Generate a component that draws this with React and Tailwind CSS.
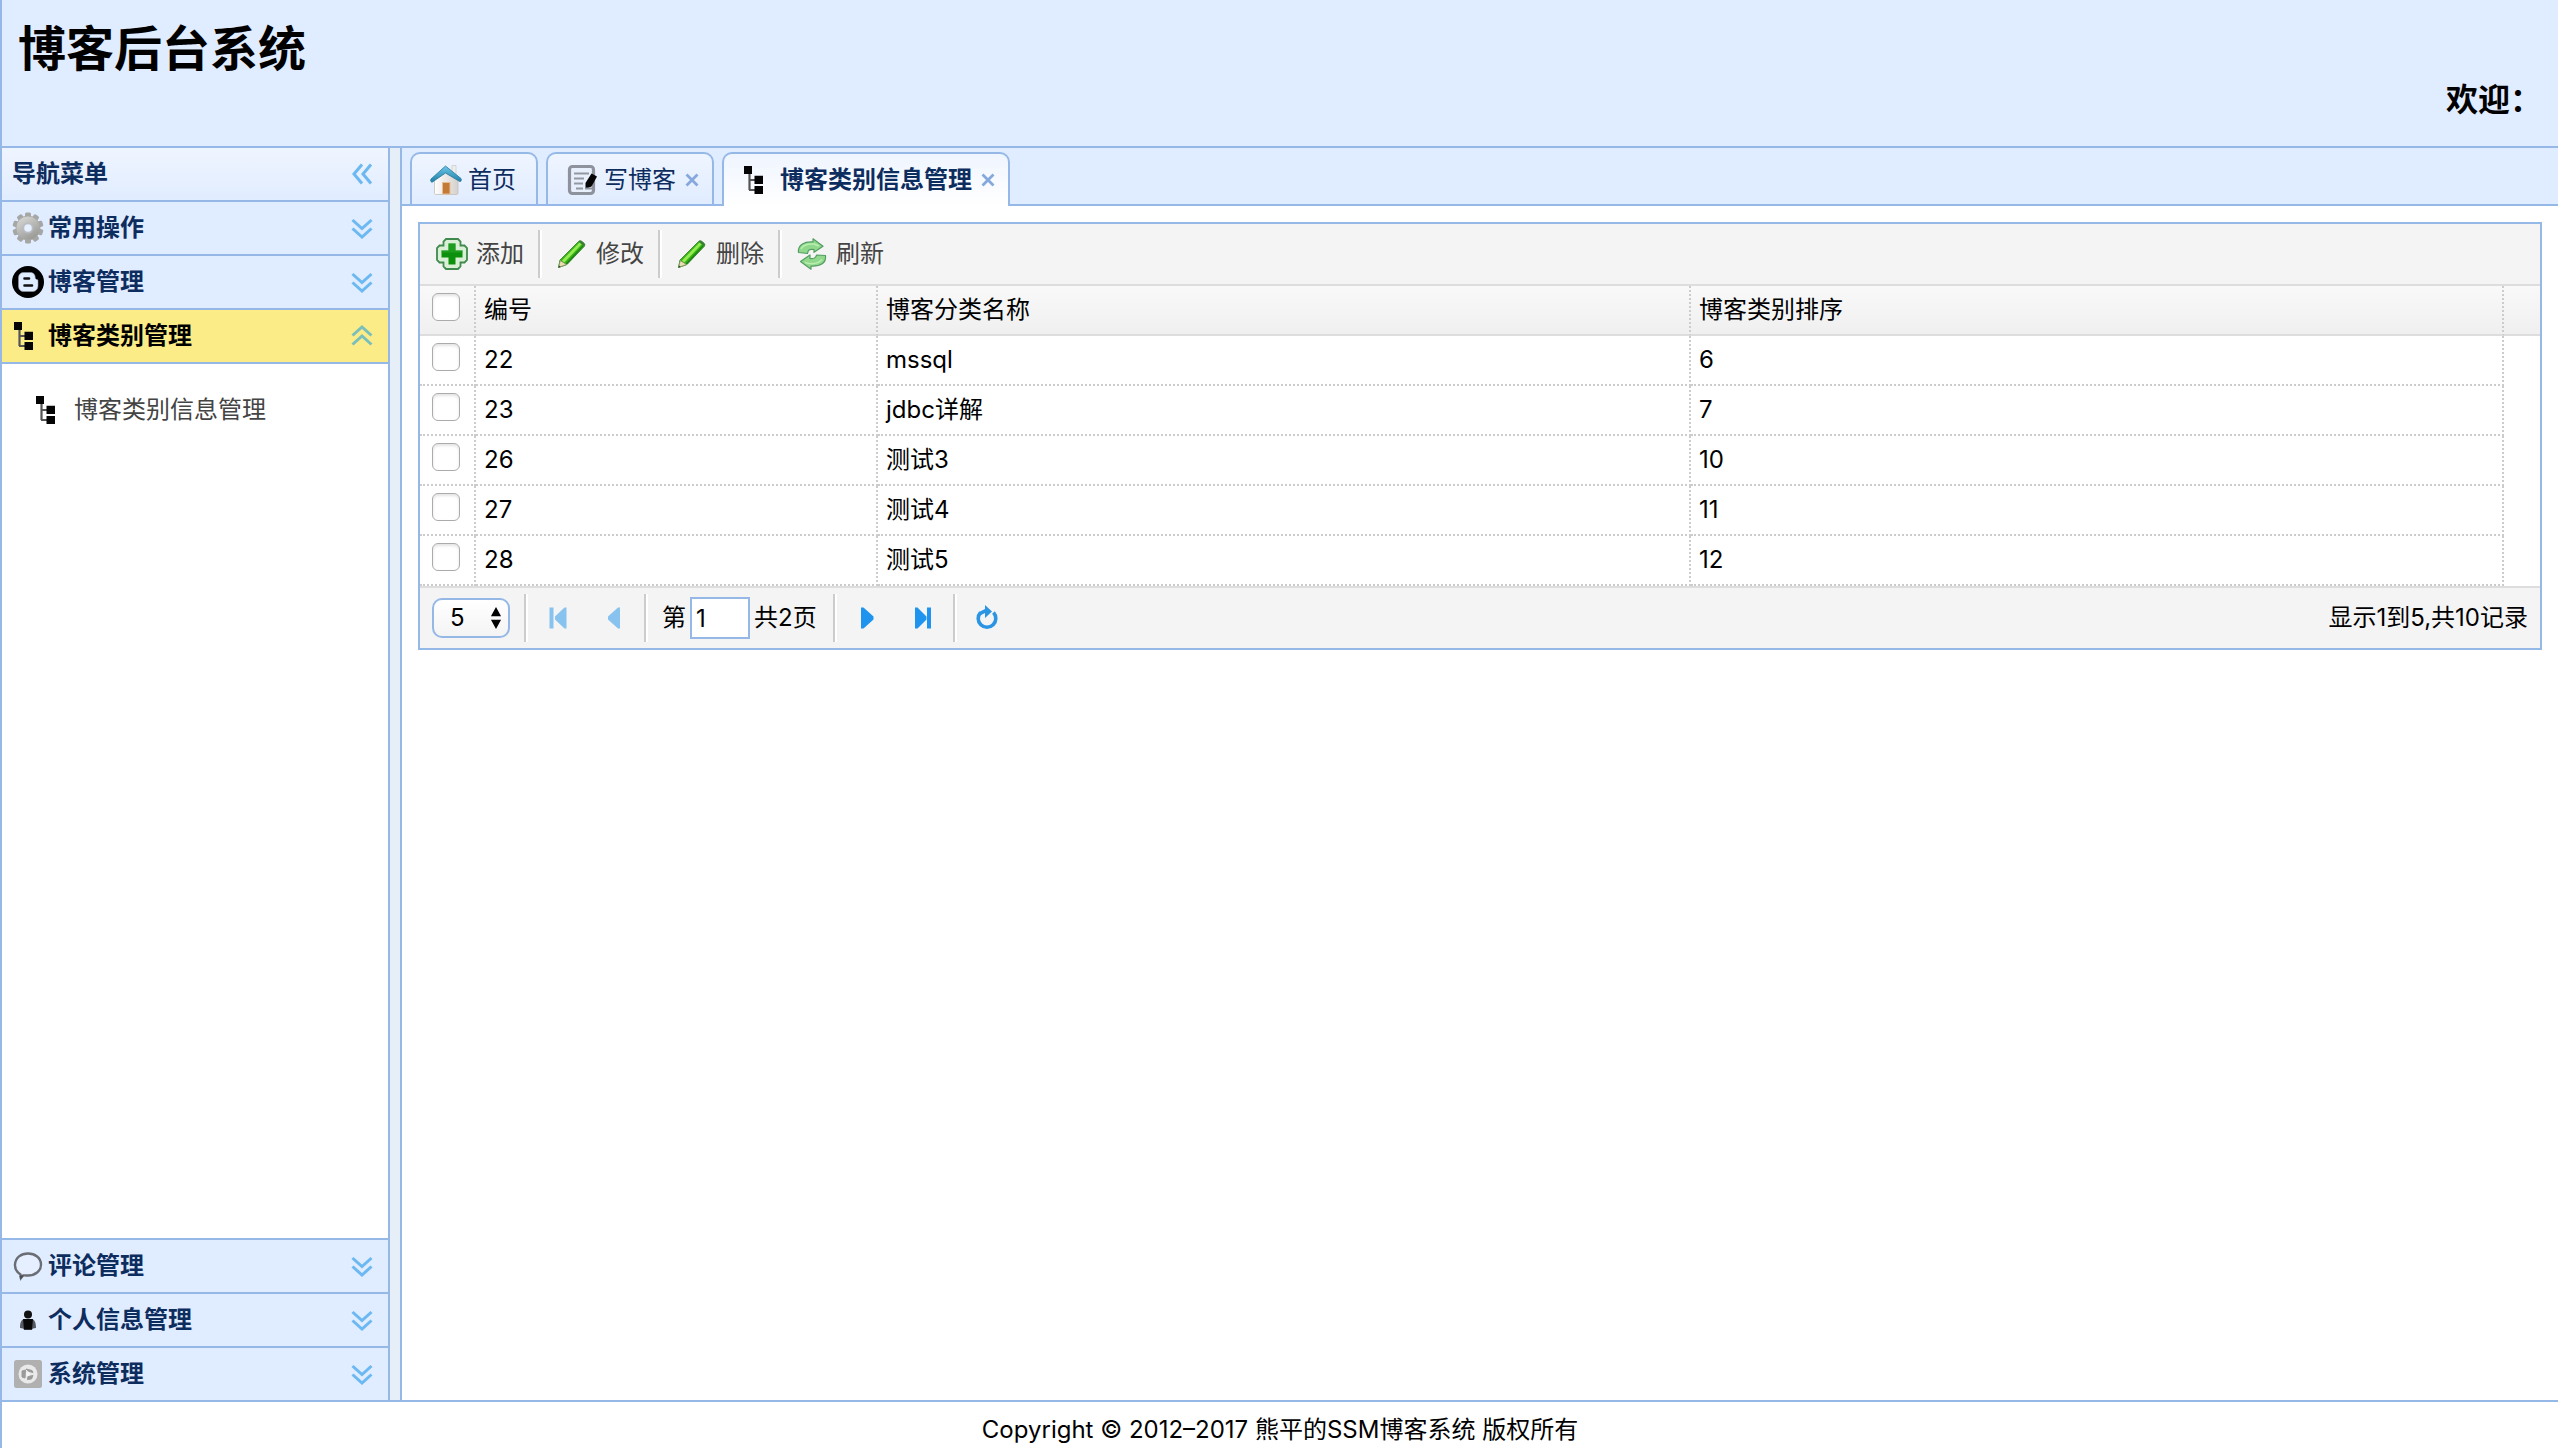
import React, { useState } from "react";

const TreeIcon = () => (
  <svg viewBox="0 0 32 32" className="size-8 shrink-0" aria-hidden="true">
    <path d="M7.500 8v18M7 16h7M7 26h7" fill="none" stroke="#555" strokeWidth="2.200" />
    <path d="M2 2h8v8H2zM12.500 11.800h8.500v8.200h-8.500zM12.500 22h8.500v8h-8.500z" fill="#050505" />
  </svg>
);

const GearIcon = () => (
  <svg viewBox="0 0 32 32" className="size-8 shrink-0" aria-hidden="true">
    <defs>
      <linearGradient id="gear" x1="0" y1="0" x2="0.6" y2="1">
        <stop offset="0" stopColor="#dededc" />
        <stop offset="1" stopColor="#9a9a97" />
      </linearGradient>
    </defs>
    <g fill="#a6a6a4">
      {[0, 36, 72, 108, 144].map((deg) => (
        <rect key={deg} x="13" y="0.5" width="6" height="31" rx="1.5" transform={`rotate(${deg} 16 16)`} />
      ))}
    </g>
    <circle cx="16" cy="16" r="12" fill="url(#gear)" stroke="#a6a6a4" strokeWidth="0.8" />
    <circle cx="16" cy="16" r="5.5" fill="#b9bcc2" />
    <circle cx="16" cy="16" r="3.8" fill="#e6f0ff" />
  </svg>
);

const BlogIcon = () => (
  <svg viewBox="0 0 32 32" className="size-8 shrink-0" aria-hidden="true">
    <circle cx="16" cy="16" r="16" fill="#000" />
    <path
      d="M12 6.500h6.500c3 0 4.700 2.200 4.700 4.800 0 1.500.7 2 1.800 2.200.9.200 1 .9 1 1.700v4.300c0 4-2.500 6-6 6h-8c-3.500 0-5.500-2-5.500-5.500v-8c0-3.500 2-5.500 5.500-5.500z"
      fill="#e0ecff"
      stroke="#8e97a6"
      strokeWidth="0.6"
    />
    <path d="M12.500 12.500h4.500M12.500 19.500h7.500" stroke="#111" strokeWidth="2.600" strokeLinecap="round" />
  </svg>
);

const BubbleIcon = () => (
  <svg viewBox="0 0 32 32" className="size-8 shrink-0" aria-hidden="true">
    <path
      d="M8.500 24.500C4.500 22 2.800 18.500 3 14.500 3.500 7.500 9 3.500 16 3.500s13 4.300 13 11-6 11-13 11c-2 0-3.500-.3-5 0l-2 2.500z"
      fill="#e6efff"
      stroke="#6a6d73"
      strokeWidth="2.400"
    />
    <path d="M7.500 25.500l.5 4 4-4z" fill="#4a4c50" />
  </svg>
);

const PersonIcon = () => (
  <svg viewBox="0 0 32 32" className="size-8 shrink-0" aria-hidden="true">
    <circle cx="16" cy="10.500" r="4" fill="#111" />
    <path d="M8 24c0-6 1.500-9 5.500-9h5c4 0 5.500 3 5.500 9l-3 .5-1.500 1.500h-7l-1.500-1.500z" fill="#565a62" />
    <path d="M11 15h10l-1 10.500h-8z" fill="#080808" />
  </svg>
);

const SystemIcon = () => (
  <svg viewBox="0 0 32 32" className="size-8 shrink-0" aria-hidden="true">
    <rect x="2" y="2" width="28" height="28" rx="2.500" fill="#b0b0b0" />
    <circle cx="16" cy="16" r="9.500" fill="#e9e9e9" />
    <path d="M14 11l6 1.500 1 2-4-1zM10 13l3.500-1-.5 8-3-1zM16 18.500l5-1-1.500 3.500-4 .5z" fill="#9a9a9a" stroke="#9a9a9a" />
    <circle cx="16" cy="16" r="2" fill="#f4f4f4" />
  </svg>
);

const HomeIcon = () => (
  <svg viewBox="0 0 32 32" className="size-8 shrink-0" aria-hidden="true">
    <defs>
      <linearGradient id="roof" x1="0" y1="0" x2="0" y2="1">
        <stop offset="0" stopColor="#6cc7e8" />
        <stop offset="1" stopColor="#1f7ea8" />
      </linearGradient>
      <linearGradient id="wall" x1="0" y1="0" x2="1" y2="0">
        <stop offset="0" stopColor="#fff" />
        <stop offset="1" stopColor="#d5d0cb" />
      </linearGradient>
    </defs>
    <path d="M22 1.500h4v10l-4-4z" fill="#eee" stroke="#c9c9c9" strokeWidth="0.7" />
    <path d="M4.500 15L16 6l12 9.500V29c0 1-.6 1.500-1.500 1.500H6c-1 0-1.500-.5-1.500-1.500z" fill="url(#wall)" stroke="#c4bfba" strokeWidth="0.8" />
    <path d="M15.500 2L31 14.500c.8 1 .2 3.500-1.300 3L15.500 9 2.500 18c-1.500.8-2.500-1.800-1.500-3z" fill="url(#roof)" stroke="#27789c" strokeWidth="0.8" />
    <rect x="12.500" y="18.500" width="7.500" height="11.500" fill="#c47a37" stroke="#e3bd95" />
  </svg>
);

const WriteIcon = () => (
  <svg viewBox="0 0 32 32" className="size-8 shrink-0" aria-hidden="true">
    <rect x="3.500" y="2.500" width="24" height="27" rx="3" fill="#e9f0fd" stroke="#8d929c" strokeWidth="3.200" />
    <path d="M8 9.500h15M8 14.500h10M8 19.500h9M10 24.500h7" stroke="#9398a1" strokeWidth="2.200" />
    <path d="M25.500 9.500l5.500 3-5.500 10-6 2.500v-6z" fill="#050505" />
    <path d="M19 24.500h8" stroke="#8d929c" strokeWidth="2" />
  </svg>
);

const AddIcon = () => (
  <svg viewBox="0 0 32 32" className="size-8 shrink-0" aria-hidden="true">
    <path
      d="M10 1h12l2.500 2.500V7.500h4L31 10v12l-2.500 2.500h-4v4L22 31H10l-2.500-2.500v-4h-4L1 22V10l2.500-2.500h4v-4z"
      fill="#d9f0d6"
      stroke="#3f8a4c"
      strokeWidth="1.800"
    />
    <path d="M12.500 5.500h7v7h7v7h-7v7h-7v-7h-7v-7h7z" fill="#0d910d" />
    <path d="M12.500 5.500h7v7h7v2h-21v-2h7z" fill="#2aa52a" opacity="0.6" />
  </svg>
);

const PencilIcon = () => (
  <svg viewBox="0 0 32 32" className="size-8 shrink-0" aria-hidden="true">
    <path d="M4 22L22.500 3.500c1-1 2-1 3-.3l2.500 2c1 1 1 2 .2 3.200L11 26.500 2.500 29.500z" fill="#35b512" stroke="#4d8a42" strokeWidth="1" />
    <path d="M6 22.500L23.500 4.500l2.200 1.800L8.300 24.500z" fill="#98ea55" />
    <path d="M9.800 25.500L27 7l.8.800L11 26.300z" fill="#1a8017" />
    <path d="M4.300 22.500l6.200 4-8 3z" fill="#ecdcb0" stroke="#7a9560" strokeWidth="0.800" />
    <path d="M3 27.500l1.800 1.200-2.500 1z" fill="#1d4f25" />
    <path d="M22.500 3.500c1-1 2-1 3-.3l2.500 2c1 1 1 2 .2 3z" fill="#3b7d3a" />
  </svg>
);

const ReloadIcon = () => (
  <svg viewBox="0 0 32 32" className="size-8 shrink-0" aria-hidden="true">
    <g fill="#90d98c" stroke="#529c63" strokeWidth="1.200" strokeLinejoin="round">
      <path d="M2.500 14.500C1.500 7 8 3.500 17 4V.8l10 7.500-9 6V11.500c-4-.5-6 0-6.500 4z" />
      <path d="M29.500 17.500c1 7.500-5 11-14.500 10.500v3.200L4.500 23.500 14 17v3.500c4 .5 6 0 6.500-3.500z" />
    </g>
    <path d="M5 11c2-4 6-5.500 13-5l5 2" fill="none" stroke="#b9efb0" strokeWidth="1.500" />
    <path d="M9 24.500c6 2 13 1.500 17-3" fill="none" stroke="#b9efb0" strokeWidth="1.500" />
  </svg>
);

const Chevrons = ({ dir }) => {
  const paths = {
    left: "M16 6.500L8 16l8 9.500M25 6.500L17 16l8 9.500",
    down: "M6.500 8l9.500 8.500L25.500 8M6.500 16.500l9.500 8.500 9.500-8.500",
    up: "M6.500 15.500L16 7l9.500 8.500M6.500 24.500L16 16l9.500 8.500",
  };
  return (
    <svg viewBox="0 0 32 32" className="size-8 shrink-0" aria-hidden="true">
      <path d={paths[dir]} fill="none" stroke={dir === "up" ? "#7bbfba" : "#6bb8f2"} strokeWidth="3" />
    </svg>
  );
};

const CloseIcon = () => (
  <svg viewBox="0 0 16 16" className="size-4" aria-hidden="true">
    <path d="M2.500 2.500l11 11M13.500 2.500l-11 11" stroke="#86a8dc" strokeWidth="2.800" />
  </svg>
);

const PAGER_PATHS = {
  first: "M7.500 5.500h4v21h-4zM24.500 5.500v21h-2L13 17.500v-3l9.500-9z",
  prev: "M22 5.500v21h-2L10 17.500v-3l10-9z",
  next: "M10 5.500v21h2.500L22.500 17.500v-3L12.500 5.500z",
  last: "M20 5.500h4v21h-4zM8 5.500v21h2.500L19.500 17.500v-3L10.500 5.500z",
};

const PagerButton = ({ type, label, disabled }) => (
  <button type="button" aria-label={label} disabled={disabled} className="px-3 disabled:opacity-50">
    <svg viewBox="0 0 32 32" className="size-8" aria-hidden="true">
      {type === "load" ? (
        <>
          <path d="M9.500 10.500A8.800 8.800 0 1 0 22.500 10.500" fill="none" stroke="#2b95e3" strokeWidth="3.600" />
          <path d="M14 3l7 6.500-7 6.500V11l-5 2.500L8 10l6-3z" fill="#2b95e3" />
        </>
      ) : (
        <path d={PAGER_PATHS[type]} fill="#1e94ee" />
      )}
    </svg>
  </button>
);

const Separator = () => <div className="h-12 w-1 border-l-2 border-r-2 border-l-[#cccccc] border-r-white" />;

const sections = [
  { title: "常用操作", icon: GearIcon, items: [] },
  { title: "博客管理", icon: BlogIcon, items: [] },
  { title: "博客类别管理", icon: TreeIcon, items: ["博客类别信息管理"] },
  { title: "评论管理", icon: BubbleIcon, items: [] },
  { title: "个人信息管理", icon: PersonIcon, items: [] },
  { title: "系统管理", icon: SystemIcon, items: [] },
];

const tabs = [
  { title: "首页", icon: HomeIcon, closable: false },
  { title: "写博客", icon: WriteIcon, closable: true },
  { title: "博客类别信息管理", icon: TreeIcon, closable: true },
];

const tools = [
  { title: "添加", icon: AddIcon },
  { title: "修改", icon: PencilIcon },
  { title: "删除", icon: PencilIcon },
  { title: "刷新", icon: ReloadIcon },
];

const rows = [
  { id: 22, name: "mssql", order: 6 },
  { id: 23, name: "jdbc详解", order: 7 },
  { id: 26, name: "测试3", order: 10 },
  { id: 27, name: "测试4", order: 11 },
  { id: 28, name: "测试5", order: 12 },
];

const Checkbox = ({ label }) => (
  <input
    type="checkbox"
    aria-label={label}
    className="block size-7 appearance-none rounded-md border border-[#ababab] bg-white shadow-[inset_0_2px_3px_#e4e4e4] checked:bg-[#1e94ee]"
  />
);

const Sidebar = () => {
  const [open, setOpen] = useState(2);

  return (
    <aside className="flex w-[388px] shrink-0 flex-col border-r-2 border-[#95b8e7] bg-white">
      <div className="flex h-[54px] shrink-0 items-center justify-between border-b-2 border-[#95b8e7] bg-linear-to-b from-[#eff5ff] to-[#e0ecff] px-2.5">
        <h2 className="font-bold text-[#0e2d5f]">导航菜单</h2>
        <button type="button" aria-label="收起导航">
          <Chevrons dir="left" />
        </button>
      </div>
      {sections.map((section, i) => {
        const Icon = section.icon;
        const active = open === i;
        return (
          <React.Fragment key={section.title}>
            <button
              type="button"
              aria-expanded={active}
              onClick={() => setOpen(i)}
              className={`flex h-[54px] shrink-0 items-center gap-1 border-b-2 border-[#95b8e7] px-2.5 text-left font-bold last:border-b-0 last:h-[52px] ${
                active ? "bg-[#fbec88] text-black" : "bg-[#e0ecff] text-[#0e2d5f]"
              }`}
            >
              <Icon />
              <span className="flex-1">{section.title}</span>
              <Chevrons dir={active ? "up" : "down"} />
            </button>
            {active && (
              <ul className="flex-1 border-b-2 border-[#95b8e7] px-8 py-[30px]">
                {section.items.map((item) => (
                  <li key={item}>
                    <a href="#" className="flex items-center gap-2 text-[#444444]">
                      <TreeIcon />
                      {item}
                    </a>
                  </li>
                ))}
              </ul>
            )}
          </React.Fragment>
        );
      })}
    </aside>
  );
};

const TabBar = () => (
  <div className="flex h-[58px] shrink-0 gap-2 border-b-2 border-[#95b8e7] bg-[#e0ecff] pl-2 pt-1">
    {tabs.map((tab, i) => {
      const Icon = tab.icon;
      const active = i === 2;
      return (
        <div
          key={tab.title}
          className={`flex items-center gap-2 rounded-t-[10px] border-2 border-b-0 border-[#95b8e7] bg-linear-to-b from-[#eff5ff] pl-[18px] pt-0.5 text-[#0e2d5f] ${
            active ? "-mb-0.5 to-white pb-0.5 font-bold" : "to-[#e0ecff]"
          } ${tab.closable ? "pr-3" : "pr-5"}`}
        >
          <button type="button" className="flex items-center gap-1.5">
            <Icon />
            {tab.title}
          </button>
          {tab.closable && (
            <button type="button" aria-label={`关闭${tab.title}`}>
              <CloseIcon />
            </button>
          )}
        </div>
      );
    })}
  </div>
);

const DataGrid = () => (
  <div className="border-2 border-[#95b8e7] bg-white">
    <div className="flex h-[62px] items-center border-b-2 border-[#dddddd] bg-[#f4f4f4] pl-0.5">
      {tools.map((tool, i) => {
        const Icon = tool.icon;
        return (
          <React.Fragment key={tool.title}>
            {i > 0 && <Separator />}
            <button type="button" className="flex items-center gap-2 px-3.5 text-[#444444]">
              <Icon />
              {tool.title}
            </button>
          </React.Fragment>
        );
      })}
    </div>

    <table className="w-full table-fixed border-separate border-spacing-0 text-left">
      <colgroup>
        <col className="w-14" />
        <col className="w-[402px]" />
        <col />
        <col />
        <col className="w-9" />
      </colgroup>
      <thead>
        <tr className="h-[50px] bg-linear-to-b from-[#f9f9f9] to-[#efefef] *:border-b-2 *:border-b-[#dddddd] *:font-normal">
          <th className="border-r-2 border-r-[#cccccc] pl-3 pt-[7px] align-top [border-right-style:dotted]">
            <Checkbox label="全选" />
          </th>
          {["编号", "博客分类名称", "博客类别排序"].map((h) => (
            <th key={h} className="border-r-2 border-r-[#cccccc] pl-2 [border-right-style:dotted]">{h}</th>
          ))}
          <td></td>
        </tr>
      </thead>
      <tbody>
        {rows.map((row) => (
          <tr key={row.id} className="h-[50px]">
            <td className="border-b-2 border-r-2 border-dotted border-[#cccccc] pl-3 pt-[7px] align-top">
              <Checkbox label={`选择${row.id}`} />
            </td>
            <td className="border-b-2 border-r-2 border-dotted border-[#cccccc] pl-2">{row.id}</td>
            <td className="border-b-2 border-r-2 border-dotted border-[#cccccc] pl-2">{row.name}</td>
            <td className="border-b-2 border-r-2 border-dotted border-[#cccccc] pl-2">{row.order}</td>
            <td></td>
          </tr>
        ))}
      </tbody>
    </table>

    <div className="flex h-[62px] items-center gap-0.5 border-t-2 border-[#dddddd] bg-[#f4f4f4] px-3">
      <div className="relative mr-3">
        <select
          aria-label="每页条数"
          defaultValue="5"
          className="block h-10 w-[78px] appearance-none rounded-[10px] border-2 border-[#95b8e7] bg-linear-to-b from-white to-[#f4f4f4] pl-4"
        >
          <option>5</option>
          <option>10</option>
          <option>20</option>
        </select>
        <svg viewBox="0 0 12 26" className="pointer-events-none absolute right-2 top-2 h-6 w-3" aria-hidden="true">
          <path d="M6 1l5.500 10H.5zM6 25l5.500-10H.5z" fill="#000" />
        </svg>
      </div>
      <Separator />
      <div className="flex">
        <PagerButton type="first" label="首页" disabled />
        <PagerButton type="prev" label="上一页" disabled />
      </div>
      <Separator />
      <label className="flex items-center gap-1 pl-3 pr-3.5">
        第
        <input type="text" defaultValue="1" className="h-[42px] w-[60px] border-2 border-[#95b8e7] bg-white pl-1" />
        <span>共2页</span>
      </label>
      <Separator />
      <div className="flex">
        <PagerButton type="next" label="下一页" />
        <PagerButton type="last" label="末页" />
      </div>
      <Separator />
      <PagerButton type="load" label="刷新" />
      <span className="ml-auto">显示1到5,共10记录</span>
    </div>
  </div>
);

const App = () => {
  return (
    <div className="flex h-screen flex-col border-l-2 border-[#95b8e7] bg-white font-['Inter','Noto_Sans_CJK_SC',sans-serif] text-2xl text-black">
      <header className="flex h-[148px] shrink-0 flex-col border-b-2 border-[#95b8e7] bg-[#e0ecff] px-4 pt-3.5">
        <h1 className="text-[48px] leading-[70px] font-bold">博客后台系统</h1>
        <p className="self-end text-[32px] leading-8 font-bold">欢迎：</p>
      </header>

      <div className="flex min-h-0 flex-1 bg-[#e6eef8]">
        <Sidebar />
        <main className="ml-2.5 flex min-w-0 flex-1 flex-col border-l-2 border-[#95b8e7] bg-white">
          <TabBar />
          <div className="p-4">
            <DataGrid />
          </div>
        </main>
      </div>

      <footer className="h-12 shrink-0 border-t-2 border-[#95b8e7] pt-3 text-center">
        Copyright © 2012–2017 熊平的SSM博客系统 版权所有
      </footer>
    </div>
  );
};

export default App;
